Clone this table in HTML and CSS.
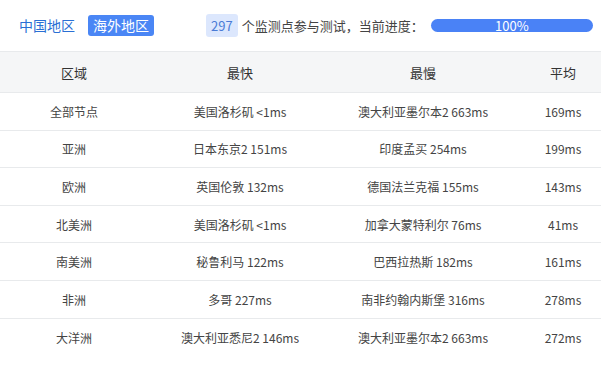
FILE: index.html
```html
<!DOCTYPE html>
<html lang="zh">
<head>
<meta charset="utf-8">
<link rel="stylesheet" href="styles.css">
</head>
<body>
<div class="top">
  <div class="tabs">
    <span class="tab">中国地区</span>
    <span class="tab active">海外地区</span>
  </div>
  <div class="status">
    <span class="count">297</span>
    <span class="desc">个监测点参与测试，当前进度：</span>
    <div class="bar"><div class="fill" style="width:100%">100%</div></div>
  </div>
</div>
<table class="grid">
  <thead>
    <tr><th class="c1">区域</th><th class="c2">最快</th><th class="c3">最慢</th><th class="c4">平均</th></tr>
  </thead>
  <tbody>
    <tr><td>全部节点</td><td>美国洛杉矶 &lt;1ms</td><td>澳大利亚墨尔本2 663ms</td><td>169ms</td></tr>
    <tr><td>亚洲</td><td>日本东京2 151ms</td><td>印度孟买 254ms</td><td>199ms</td></tr>
    <tr><td>欧洲</td><td>英国伦敦 132ms</td><td>德国法兰克福 155ms</td><td>143ms</td></tr>
    <tr><td>北美洲</td><td>美国洛杉矶 &lt;1ms</td><td>加拿大蒙特利尔 76ms</td><td>41ms</td></tr>
    <tr><td>南美洲</td><td>秘鲁利马 122ms</td><td>巴西拉热斯 182ms</td><td>161ms</td></tr>
    <tr><td>非洲</td><td>多哥 227ms</td><td>南非约翰内斯堡 316ms</td><td>278ms</td></tr>
    <tr><td>大洋洲</td><td>澳大利亚悉尼2 146ms</td><td>澳大利亚墨尔本2 663ms</td><td>272ms</td></tr>
  </tbody>
</table>
</body>
</html>
```
FILE: styles.css
```css
* { box-sizing: border-box; }
body {
  margin: 0;
  font-family: "Noto Sans CJK SC", "Noto Sans", sans-serif;
  color: #333;
  background: #fff;
}
.top {
  display: flex;
  align-items: center;
  height: 51px;
  padding: 0 8px 0 14px;
  gap: 52px;
}
.tabs {
  display: flex;
  align-items: center;
  gap: 8px;
}
.tab {
  font-size: 14px;
  line-height: 21px;
  padding: 0 5px;
  color: #2a6fd4;
  border-radius: 3px;
}
.tab.active {
  background: #4a86f5;
  color: #fff;
}
.status {
  display: flex;
  align-items: center;
  flex: 1;
}
.count {
  background: #dce7fd;
  color: #4a7bd6;
  font-size: 13px;
  line-height: 23px;
  padding: 0 5px;
  border-radius: 3px;
  margin-right: 4px;
}
.desc {
  font-size: 13px;
  color: #444;
}
.bar {
  flex: 1;
  margin-left: 7px;
  height: 13px;
  border-radius: 7px;
  background: #e8eefc;
}
.fill {
  height: 100%;
  background: #4a82f6;
  color: #fff;
  font-size: 13px;
  line-height: 13px;
  text-align: center;
  border-radius: 7px;
}
.grid {
  width: 100%;
  border-collapse: collapse;
  table-layout: fixed;
}
.grid th {
  background: #f5f6f7;
  font-weight: normal;
  font-size: 13px;
  color: #333;
  height: 41px;
  border-top: 1px solid #e8eaec;
  border-bottom: 1px solid #e8eaec;
}
.grid td {
  text-align: center;
  font-size: 12px;
  height: 37.6px;
  color: #444;
  border-bottom: 1px solid #e8eaec;
}
.grid th:last-child,
.grid td:last-child { padding-left: 12px; }
.grid tbody tr:last-child td { border-bottom: none; }
.c1 { width: 148px; }
.c2 { width: 184px; }
.c3 { width: 182px; }
.c4 { width: 87px; }
```
